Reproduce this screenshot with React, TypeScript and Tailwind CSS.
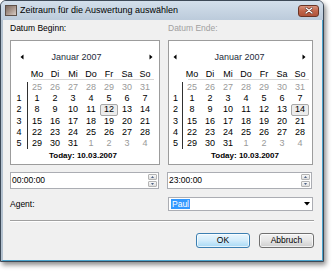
import React from 'react';

type Day = { n: number; gray?: boolean };

const rows: { wk: string; days: Day[] }[] = [
  { wk: '', days: [25, 26, 27, 28, 29, 30, 31].map((n) => ({ n, gray: true })) },
  { wk: '1', days: [1, 2, 3, 4, 5, 6, 7].map((n) => ({ n })) },
  { wk: '2', days: [8, 9, 10, 11, 12, 13, 14].map((n) => ({ n })) },
  { wk: '3', days: [15, 16, 17, 18, 19, 20, 21].map((n) => ({ n })) },
  { wk: '4', days: [22, 23, 24, 25, 26, 27, 28].map((n) => ({ n })) },
  {
    wk: '5',
    days: [
      { n: 29 },
      { n: 30 },
      { n: 31 },
      { n: 1, gray: true },
      { n: 2, gray: true },
      { n: 3, gray: true },
      { n: 4, gray: true },
    ],
  },
];

const dayNames = ['Mo', 'Di', 'Mi', 'Do', 'Fr', 'Sa', 'So'];

function ArrowLeft() {
  return (
    <svg width="4" height="6" viewBox="0 0 4 6">
      <path d="M3.5 0.5 L0.5 3 L3.5 5.5Z" fill="#000" />
    </svg>
  );
}

function ArrowRight() {
  return (
    <svg width="4" height="6" viewBox="0 0 4 6">
      <path d="M0.5 0.5 L3.5 3 L0.5 5.5Z" fill="#000" />
    </svg>
  );
}

type CalProps = {
  boxCls: string;
  weekCls: string;
  headCls: string;
  monthCls: string;
  todayCls: string;
  sel: number;
};

function Calendar({ boxCls, weekCls, headCls, monthCls, todayCls, sel }: CalProps) {
  return (
    <div className={`${boxCls} h-[125px] border border-[#9c9c9c] bg-white text-[9px] leading-none text-black`}>
      {/* month header */}
      <div className={`mt-[10px] h-[12px] flex items-center ${headCls}`}>
        <ArrowLeft />
        <div className={`flex-1 text-center text-[#1e2b3c] ${monthCls}`}>Januar 2007</div>
        <ArrowRight />
      </div>

      {/* day names */}
      <div className="mt-[6px] flex">
        <div className={weekCls} />
        <div>
          <div className="flex h-[10px] items-center">
            {dayNames.map((d) => (
              <div key={d} className="w-[18px] text-center">
                {d}
              </div>
            ))}
          </div>
          <div className="ml-[5px] h-px bg-[#d6d6d6]" />
        </div>
      </div>

      {/* weeks */}
      <div className="mt-[2px] flex">
        <div className={`${weekCls} border-r border-[#303030]`}>
          {rows.map((r, i) => (
            <div key={i} className="h-[11.2px] flex items-center justify-center">
              {r.wk}
            </div>
          ))}
        </div>
        <div>
          {rows.map((r, i) => (
            <div key={i} className="flex h-[11.2px]">
              {r.days.map((d, j) => {
                const isSel = i === 2 && d.n === sel;
                return (
                  <div
                    key={j}
                    className={`w-[18px] flex items-center justify-center ${d.gray ? 'text-[#9a9a9a]' : ''} ${
                      isSel ? 'border border-[#a8a8a8] bg-[#ececec] rounded-[2px]' : ''
                    }`}
                  >
                    {d.n}
                  </div>
                );
              })}
            </div>
          ))}
        </div>
      </div>

      {/* today */}
      <div className={`mt-[1px] h-[12px] flex items-center justify-center font-bold text-[8px] ${todayCls}`}>
        Today: 10.03.2007
      </div>
    </div>
  );
}

function Spinner() {
  return (
    <div className="flex flex-col gap-px">
      <div className="w-[9px] h-[6px] rounded-[1px] border border-[#b4b4b4] bg-gradient-to-b from-[#f8f8f8] to-[#dedede] flex items-center justify-center">
        <svg width="3" height="2" viewBox="0 0 3 2">
          <path d="M0 2 L1.5 0 L3 2Z" fill="#4d6185" />
        </svg>
      </div>
      <div className="w-[9px] h-[6px] rounded-[1px] border border-[#b4b4b4] bg-gradient-to-b from-[#f8f8f8] to-[#dedede] flex items-center justify-center">
        <svg width="3" height="2" viewBox="0 0 3 2">
          <path d="M0 0 L1.5 2 L3 0Z" fill="#4d6185" />
        </svg>
      </div>
    </div>
  );
}

function TimeBox({ value, cls }: { value: string; cls: string }) {
  return (
    <div className={`${cls} h-[17px] border border-[#abadb3] bg-white flex items-center pl-[1px] pr-[1px]`}>
      <span className="flex-1 text-[8.5px]">{value}</span>
      <Spinner />
    </div>
  );
}

export default function App() {
  return (
    <div className="w-[334px] h-[271px] bg-white overflow-hidden font-['Liberation_Sans',Arial,sans-serif] text-black">
      <div className="w-[324px] h-[262px] flex flex-col rounded-t-[6px] border border-[#3d4957] bg-[#c4d2e1] shadow-[2px_3px_5px_rgba(0,0,0,0.45)]">
        {/* title bar */}
        <div className="h-[19px] flex items-center rounded-t-[5px] bg-gradient-to-b from-[#d3dfeb] to-[#bccbdb]">
          <div className="ml-[4px] w-[12px] h-[11px] border border-[#5e5048] bg-gradient-to-br from-[#7d6b62] via-[#a8968c] to-[#d8ccc4]" />
          <span className="ml-[3px] text-[9px] leading-none text-black">Zeitraum für die Auswertung auswählen</span>
          <div className="ml-auto mr-[4px] w-[21px] h-[12px] rounded-[3px] border border-[#6a3424] bg-gradient-to-b from-[#d9937e] via-[#c0654a] to-[#b0533a] flex items-center justify-center">
            <svg width="8" height="7" viewBox="0 0 8 7">
              <path d="M1 1 L7 6 M7 1 L1 6" stroke="#5b2a1e" strokeWidth="2.4" strokeLinecap="round" />
              <path d="M1 1 L7 6 M7 1 L1 6" stroke="#ffffff" strokeWidth="1.3" strokeLinecap="round" />
            </svg>
          </div>
        </div>

        {/* client area */}
        <div className="flex-1 flex flex-col border-l-2 border-l-[#b3c1cf] border-r border-r-[#4aa3cc] border-b border-b-[#4aa3cc] bg-[#f0f0f0] pl-[7px] pr-[8px] text-[8.5px] leading-none">
          <div className="mt-[3px] h-[11px] flex">
            <div className="w-[150px] flex items-center">Datum Beginn:</div>
            <div className="ml-[8px] flex items-center text-[#a0a0a0]">Datum Ende:</div>
          </div>

          <div className="mt-[6px] flex gap-[8px]">
            <Calendar
              boxCls="w-[150px]"
              weekCls="w-[17px]"
              headCls="pl-[9px] pr-[6px]"
              monthCls="pr-[20px]"
              todayCls="pr-[4px]"
              sel={12}
            />
            <Calendar
              boxCls="w-[145px]"
              weekCls="w-[14px]"
              headCls="pl-[4px] pr-[6px]"
              monthCls=""
              todayCls="pl-[9px]"
              sel={14}
            />
          </div>

          <div className="mt-[7px] flex gap-[8px]">
            <TimeBox value="00:00:00" cls="w-[149px]" />
            <TimeBox value="23:00:00" cls="w-[145px]" />
          </div>

          <div className="mt-[8px] h-[14px] flex items-center">
            <div className="w-[150px]">Agent:</div>
            <div className="ml-[8px] w-[145px] h-[14px] border border-[#abadb3] bg-white flex items-center pl-[2px] pr-[2px]">
              <span className="bg-[#3399ff] text-white px-[1px] h-[10px] flex items-center">Paul</span>
              <svg className="ml-auto" width="6" height="4" viewBox="0 0 6 4">
                <path d="M0 0 L6 0 L3 3.5Z" fill="#000" />
              </svg>
            </div>
          </div>

          <div className="mt-[9px] border-t border-t-[#a0a0a0] border-b border-b-white" />

          <div className="mt-[11px] flex justify-end gap-[9px]">
            <button className="w-[54px] h-[15px] rounded-[3px] border border-[#3c7fb1] bg-gradient-to-b from-[#eaf6fd] via-[#d2ecfb] to-[#a7d9f5] text-[8.5px] leading-none text-black shadow-[inset_0_0_0_1px_rgba(255,255,255,0.7)]">
              OK
            </button>
            <button className="w-[55px] h-[15px] rounded-[3px] border border-[#707070] bg-gradient-to-b from-[#f2f2f2] via-[#e6e6e6] to-[#cfcfcf] text-[8.5px] leading-none text-black shadow-[inset_0_0_0_1px_rgba(255,255,255,0.7)]">
              Abbruch
            </button>
          </div>
        </div>
      </div>
    </div>
  );
}
